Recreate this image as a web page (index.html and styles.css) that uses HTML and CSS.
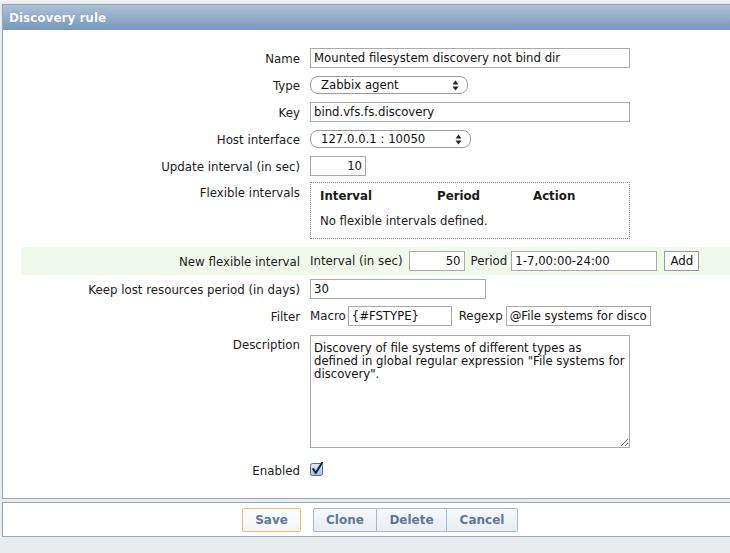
FILE: index.html
```html
<!DOCTYPE html>
<html>
<head>
<meta charset="utf-8">
<link rel="stylesheet" href="styles.css">
</head>
<body>
<div class="page">
  <div class="panel">
    <div class="header">Discovery rule</div>
    <div class="form">
      <div class="row">
        <div class="label">Name</div>
        <div class="value"><input class="inp w320" type="text" value="Mounted filesystem discovery not bind dir"></div>
      </div>
      <div class="row">
        <div class="label">Type</div>
        <div class="value">
          <div class="select w158"><span>Zabbix agent</span>
            <svg class="arrows" width="7" height="11" viewBox="0 0 7 11"><path d="M3.5 0.5 L6.5 4.5 L0.5 4.5 Z M3.5 10.5 L6.5 6.5 L0.5 6.5 Z" fill="#222"/></svg>
          </div>
        </div>
      </div>
      <div class="row">
        <div class="label">Key</div>
        <div class="value"><input class="inp w320" type="text" value="bind.vfs.fs.discovery"></div>
      </div>
      <div class="row">
        <div class="label">Host interface</div>
        <div class="value">
          <div class="select w161"><span>127.0.0.1 : 10050</span>
            <svg class="arrows" width="7" height="11" viewBox="0 0 7 11"><path d="M3.5 0.5 L6.5 4.5 L0.5 4.5 Z M3.5 10.5 L6.5 6.5 L0.5 6.5 Z" fill="#222"/></svg>
          </div>
        </div>
      </div>
      <div class="row">
        <div class="label">Update interval (in sec)</div>
        <div class="value"><input class="inp w56 right" type="text" value="10"></div>
      </div>
      <div class="row top flexrow">
        <div class="label">Flexible intervals</div>
        <div class="value">
          <div class="flexbox">
            <div class="fhead">
              <span class="c1">Interval</span><span class="c2">Period</span><span class="c3">Action</span>
            </div>
            <div class="fempty">No flexible intervals defined.</div>
          </div>
        </div>
      </div>
      <div class="row green">
        <div class="label">New flexible interval</div>
        <div class="value inline">
          <span class="txt t-interval">Interval (in sec)</span>
          <input class="inp w56 right" type="text" value="50">
          <span class="txt t-period">Period</span>
          <input class="inp w146" type="text" value="1-7,00:00-24:00">
          <button class="add">Add</button>
        </div>
      </div>
      <div class="row">
        <div class="label">Keep lost resources period (in days)</div>
        <div class="value"><input class="inp w176" type="text" value="30"></div>
      </div>
      <div class="row">
        <div class="label">Filter</div>
        <div class="value inline">
          <span class="txt t-macro">Macro</span>
          <input class="inp w104" type="text" value="{#FSTYPE}">
          <span class="txt t-regexp">Regexp</span>
          <input class="inp w145" type="text" value="@File systems for discovery">
        </div>
      </div>
      <div class="row top descrow">
        <div class="label">Description</div>
        <div class="value"><textarea class="desc" wrap="off">Discovery of file systems of different types as
defined in global regular expression "File systems for
discovery".</textarea></div>
      </div>
      <div class="row enabled">
        <div class="label">Enabled</div>
        <div class="value">
          <svg class="check" width="14" height="14" viewBox="0 0 14 14">
            <defs>
              <linearGradient id="cb" x1="0" y1="0" x2="0" y2="1">
                <stop offset="0" stop-color="#dfe9f6"/>
                <stop offset="1" stop-color="#a9c1de"/>
              </linearGradient>
            </defs>
            <rect x="0.5" y="1.5" width="12" height="12" rx="2" fill="url(#cb)" stroke="#4f6f99"/>
            <path d="M3.2 7 L5.8 11 L12 0.8" fill="none" stroke="#0f2140" stroke-width="2" stroke-linecap="round" stroke-linejoin="round"/>
          </svg>
        </div>
      </div>
    </div>
  </div>
  <div class="footer">
    <button class="btn save">Save</button>
    <div class="group">
      <button class="btn">Clone</button>
      <button class="btn">Delete</button>
      <button class="btn">Cancel</button>
    </div>
  </div>
</div>
</body>
</html>
```
FILE: styles.css
```css
* { box-sizing: border-box; }
html, body { margin: 0; padding: 0; }
body {
  background: #e9ecef;
  font-family: "DejaVu Sans", Verdana, sans-serif;
  font-size: 11.7px;
  color: #1a1a1a;
  width: 730px;
  height: 553px;
  overflow: hidden;
}
.page {
  padding-top: 4px;
  padding-left: 2px;
  background: linear-gradient(#f2f4f6 0, #e6e9ec 4px, #e9ecef 4px);
}
.panel {
  background: #fff;
  border: 1px solid #95a6b9;
  border-right: none;
}
.header {
  height: 25px;
  background: linear-gradient(#adc1d7, #7797bc);
  color: #fff;
  font-weight: bold;
  font-size: 12px;
  line-height: 26px;
  padding-left: 6px;
  text-shadow: 0 0 1px rgba(60, 80, 110, 0.4);
}
.form {
  padding: 14px 0 16px 18px;
}
.row {
  display: flex;
  align-items: center;
  min-height: 27px;
}
.row.top { align-items: flex-start; }
.label {
  width: 279px;
  flex: none;
  text-align: right;
  font-size: 11.8px;
  color: #1a1a1a;
  padding-top: 2px;
}
.value {
  margin-left: 10px;
  display: flex;
  align-items: center;
}
.inline .txt { font-size: 11.8px; }
.inline .inp { margin-right: 6px; }
.t-interval { margin-right: 6px; }
.t-period { margin-right: 4px; }
.t-macro { margin-right: 2px; }
.t-regexp { margin-left: 1px; margin-right: 3px; }
.inp {
  height: 20px;
  border: 1px solid #a9a9a9;
  font-family: "DejaVu Sans", Verdana, sans-serif;
  font-size: 11.7px;
  color: #111;
  padding: 0 3px;
  background: #fff;
  margin: 0;
  outline: none;
}
.right { text-align: right; }
.w320 { width: 320px; }
.w56 { width: 56px; }
.w146 { width: 146px; }
.w176 { width: 176px; }
.w104 { width: 104px; }
.w145 { width: 145px; }
.w158 { width: 158px; }
.w161 { width: 161px; }
.select {
  position: relative;
  height: 18px;
  border: 1px solid #9a9a9a;
  border-radius: 8px;
  background: #fff;
  padding-left: 10px;
  line-height: 17px;
  font-size: 11.7px;
  color: #111;
}
.select .arrows {
  position: absolute;
  right: 8px;
  top: 3px;
}
.flexrow { padding: 3px 0 8px; }
.flexrow .label { padding-top: 4px; }
.flexbox {
  width: 320px;
  height: 57px;
  border: 1px dotted #8a8a8a;
  padding: 5px 0 0 9px;
}
.fhead {
  display: flex;
  font-weight: bold;
  font-size: 11.8px;
  height: 16px;
  line-height: 16px;
}
.fhead .c1 { width: 117px; }
.fhead .c2 { width: 96px; }
.fempty {
  margin-top: 10px;
  line-height: 14px;
}
.green {
  background: #f0f9ec;
  min-height: 28px;
}
.add {
  height: 20px;
  width: 35px;
  border: 1px solid #9a9a9a;
  background: #fff;
  font-family: "DejaVu Sans", Verdana, sans-serif;
  font-size: 11.8px;
  color: #111;
  padding: 0;
  margin-left: 1px;
}
.descrow { padding: 6px 0 7px; }
.descrow .label { padding-top: 3px; }
.desc {
  width: 320px;
  height: 113px;
  border: 1px solid #a9a9a9;
  font-family: "DejaVu Sans", Verdana, sans-serif;
  font-size: 11.7px;
  line-height: 13px;
  color: #111;
  padding: 6px 3px 5px;
  overflow: hidden;
  margin: 0;
  display: block;
}
.enabled .label { padding-top: 5px; }
.check { display: block; margin-top: 0; }
.footer {
  margin-top: 3px;
  background: #fff;
  border: 1px solid #95a6b9;
  border-right: none;
  height: 35px;
  display: flex;
  justify-content: center;
  align-items: flex-start;
  padding: 5px 0 0 27px;
}
.btn {
  height: 24px;
  font-family: "DejaVu Sans", Verdana, sans-serif;
  font-weight: bold;
  font-size: 12px;
  color: #5e7898;
  background: linear-gradient(#f7f9fb, #e7edf3);
  border: 1px solid #a7b8ca;
  border-radius: 2px;
  padding: 0;
  margin: 0;
}
.save {
  width: 59px;
  background: linear-gradient(#fdfdfd, #f3f5f8);
  border-color: #efbc6a;
  margin-right: 12px;
}
.group { display: flex; }
.group .btn { border-radius: 0; }
.group .btn:first-child { width: 64px; border-radius: 2px 0 0 2px; }
.group .btn:nth-child(2) { width: 70px; border-left: none; }
.group .btn:nth-child(3) { width: 71px; border-left: none; border-radius: 0 2px 2px 0; }
```
